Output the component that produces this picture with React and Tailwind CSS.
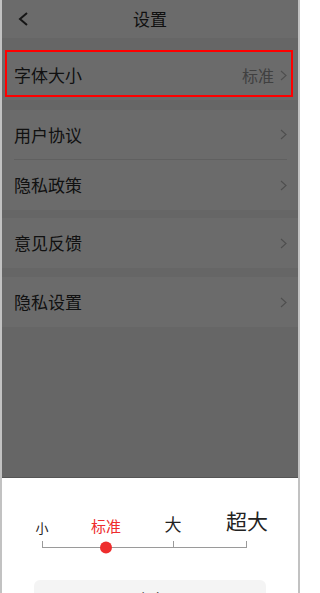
import React from "react";

const rowText = "text-[17px] text-[#2a2a2a]";

function Chevron() {
  return (
    <svg width="7" height="11" viewBox="0 0 7 11" className="shrink-0">
      <polyline points="1,1 6,5.5 1,10" fill="none" stroke="#bbb" strokeWidth="1.2" />
    </svg>
  );
}

function Row({ label, value, divider }) {
  return (
    <div className="bg-white pl-[12px] pr-[11px]">
      <div className={`flex h-[50px] items-center justify-between ${divider ? "border-b border-[#e4e4e4]" : ""}`}>
        <span className={rowText}>{label}</span>
        <div className="flex items-center gap-[6px]">
          {value && <span className="text-[16px] text-[#999]">{value}</span>}
          <Chevron />
        </div>
      </div>
    </div>
  );
}

// positions of the four stops on the scale
const stops = [
  { label: "小", x: 40, size: "text-[13px]", top: "top-[-1px]" },
  { label: "标准", x: 104, size: "text-[15px] text-[#ee2d2d]", top: "top-[-4px]" },
  { label: "大", x: 171, size: "text-[17px]", top: "top-[-7px]" },
  { label: "超大", x: 245, size: "text-[21px]", top: "top-[-12px]" },
];

function FontSizeSlider() {
  return (
    <div className="relative h-[40px]">
      {stops.map((s) => (
        <span
          key={s.label}
          className={`absolute -translate-x-1/2 leading-none text-[#222] ${s.size} ${s.top}`}
          style={{ left: s.x }}
        >
          {s.label}
        </span>
      ))}
      <svg width="296" height="40" className="absolute left-0 top-0">
        <g stroke="#9a9a9a" strokeWidth="1" fill="none">
          <line x1="40" y1="25.5" x2="245" y2="25.5" />
          <line x1="40.5" y1="19" x2="40.5" y2="26" />
          <line x1="171.5" y1="19" x2="171.5" y2="26" />
          <line x1="244.5" y1="19" x2="244.5" y2="26" />
        </g>
        <circle cx="104" cy="25.5" r="6" fill="#ee2d2d" />
      </svg>
    </div>
  );
}

export default function App() {
  return (
    <div className="relative h-[593px] w-[300px] overflow-hidden border-x-2 border-[#c2c2c2] bg-[#f3f3f3] font-['Noto_Sans_CJK_SC','Noto_Sans',sans-serif]">
      {/* header */}
      <div className="relative flex h-[38px] items-center justify-center bg-white">
        <svg width="12" height="14" viewBox="0 0 12 14" className="absolute left-[15px] top-[12px]">
          <polyline points="10,1 3,7 10,13" fill="none" stroke="#333" strokeWidth="2" />
        </svg>
        <span className="text-[17px] text-[#2a2a2a]">设置</span>
      </div>

      <div className="mt-[12px]">
        <Row label="字体大小" value="标准" />
      </div>
      <div className="mt-[10px]">
        <Row label="用户协议" divider />
        <Row label="隐私政策" />
      </div>
      <div className="mt-[8px]">
        <Row label="意见反馈" />
      </div>
      <div className="mt-[9px]">
        <Row label="隐私设置" />
      </div>

      {/* dim overlay */}
      <div className="absolute inset-0 bg-black/[0.58]" />

      {/* highlight box */}
      <div className="absolute left-[3px] top-[50px] h-[47px] w-[288px] border-2 border-[#ff0000]" />

      {/* bottom sheet */}
      <div className="absolute left-0 right-0 top-[477px] h-[150px] border-t border-[#555] bg-white pt-[44px]">
        <FontSizeSlider />
        <div className="mx-auto mt-[18px] flex h-[38px] w-[232px] items-center justify-center rounded-md bg-[#f4f4f4] text-[16px] text-[#333]">
          确定
        </div>
      </div>
    </div>
  );
}
